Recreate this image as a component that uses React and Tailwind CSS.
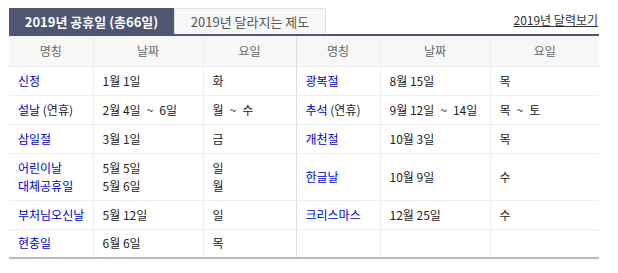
const rows = [
    { left: { name: '신정', date: '1월 1일', day: '화' }, right: { name: '광복절', date: '8월 15일', day: '목' } },
    { left: { name: '설날', sub: ' (연휴)', date: '2월 4일 ~ 6일', day: '월 ~ 수' }, right: { name: '추석', sub: ' (연휴)', date: '9월 12일 ~ 14일', day: '목 ~ 토' } },
    { left: { name: '삼일절', date: '3월 1일', day: '금' }, right: { name: '개천절', date: '10월 3일', day: '목' } },
    {
        tall: true,
        left: { name: ['어린이날', '대체공휴일'], date: ['5월 5일', '5월 6일'], day: ['일', '월'] },
        right: { name: '한글날', date: '10월 9일', day: '수' },
    },
    { left: { name: '부처님오신날', date: '5월 12일', day: '일' }, right: { name: '크리스마스', date: '12월 25일', day: '수' } },
    { left: { name: '현충일', date: '6월 6일', day: '목' }, right: null },
];

// widen the gap around "~" like the reference
const withTilde = (t) => {
    if (!t.includes(' ~ ')) return t;
    const [a, b] = t.split(' ~ ');
    return (
        <>
            {a}
            <span className="mx-[6px]">~</span>
            {b}
        </>
    );
};

const lines = (v) => (Array.isArray(v) ? v.map((t) => <div key={t}>{t}</div>) : withTilde(v));

function Cells({ item, last }) {
    const base = 'border-b border-[#eeeeee] pl-[9px] pr-0 align-middle whitespace-nowrap';
    if (!item) {
        return (
            <>
                <td className={`${base} border-r`}></td>
                <td className={`${base} border-r`}></td>
                <td className={base}></td>
            </>
        );
    }
    return (
        <>
            <td className={`${base} border-r text-[#0000cc]`}>
                {lines(item.name)}
                {item.sub && <span className="text-[#222]">{item.sub}</span>}
            </td>
            <td className={`${base} border-r`}>{lines(item.date)}</td>
            <td className={`${base} ${last ? '' : 'border-r border-r-[#dddddd]'}`}>{lines(item.day)}</td>
        </>
    );
}

export default function App() {
    return (
        <div className="bg-white w-[618px] h-[273px] pt-2 pl-[9px] text-[12px] leading-[18px] text-[#222]" style={{ fontFamily: '"Noto Sans CJK KR", "Noto Sans", sans-serif' }}>
            <div className="w-[590px]">
                <div className="flex items-end h-[28px] border-b-2 border-[#4f5672]">
                    <div className="w-[165px] h-[28px] bg-[#4f5672] text-white font-bold text-[13px] flex items-center justify-center -mb-[2px]">
                        2019년 공휴일 (총66일)
                    </div>
                    <div className="w-[152px] h-[26px] bg-[#f7f7f7] border border-b-0 border-[#e2e2e2] text-[#555] text-[13px] flex items-center justify-center">
                        2019년 달라지는 제도
                    </div>
                    <a className="ml-auto mb-[5px] mr-[1px] text-[#333] underline" href="#">2019년 달력보기</a>
                </div>
                <table className="w-[590px] table-fixed border-collapse border-b-2 border-[#b8b8c0]">
                    <colgroup>
                        <col className="w-[84px]" />
                        <col className="w-[110px]" />
                        <col className="w-[93px]" />
                        <col className="w-[84px]" />
                        <col className="w-[110px]" />
                        <col className="w-[109px]" />
                    </colgroup>
                    <thead>
                        <tr className="h-[30px] bg-[#f7f7f7] text-[#666]">
                            {['명칭', '날짜', '요일', '명칭', '날짜', '요일'].map((h, i) => (
                                <th key={i} className={`font-normal border-b border-[#eeeeee] ${i < 5 ? 'border-r' : ''} ${i === 2 ? 'border-r-[#dddddd]' : ''}`}>{h}</th>
                            ))}
                        </tr>
                    </thead>
                    <tbody>
                        {rows.map((r, i) => (
                            <tr key={i} className={r.tall ? 'h-[47px]' : 'h-[29px]'}>
                                <Cells item={r.left} />
                                <Cells item={r.right} last />
                            </tr>
                        ))}
                    </tbody>
                </table>
            </div>
        </div>
    );
}
